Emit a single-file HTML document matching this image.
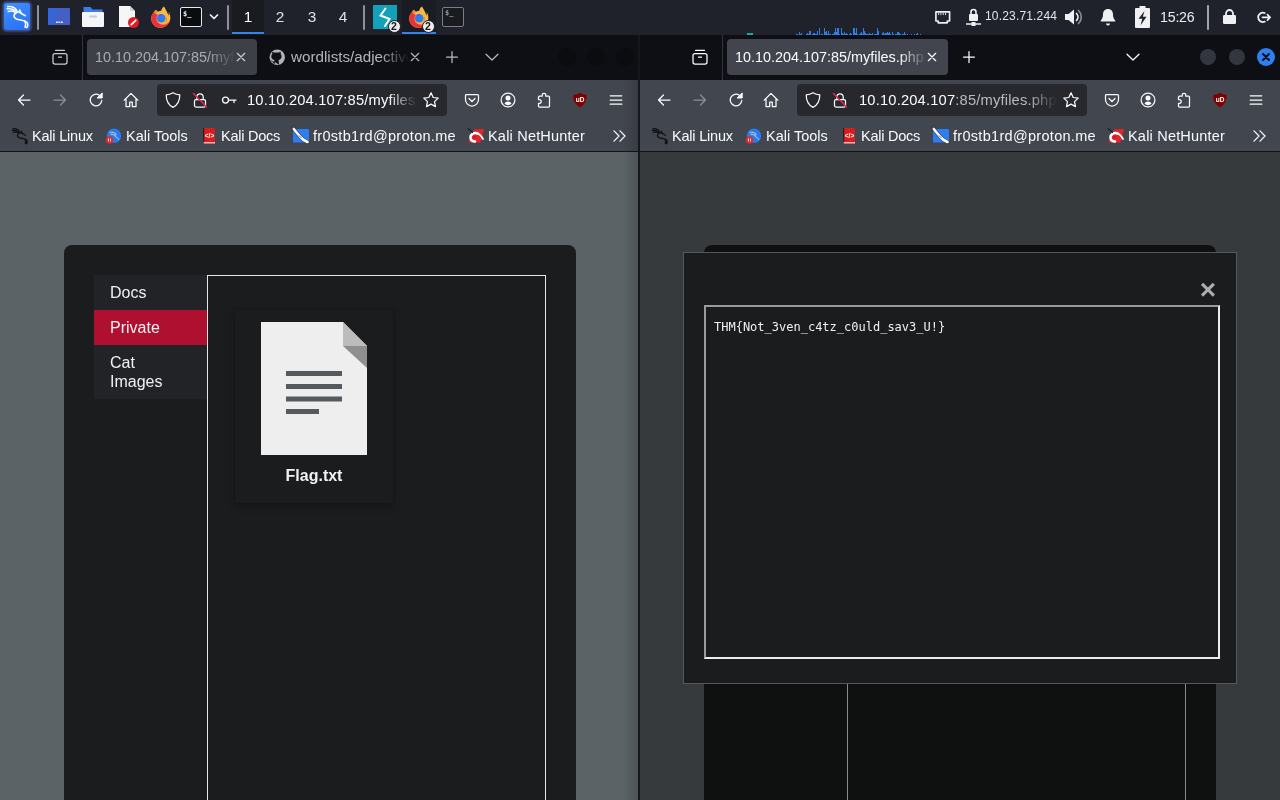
<!DOCTYPE html>
<html lang="en">
<head>
<meta charset="utf-8">
<title>Desktop</title>
<style>
*{box-sizing:border-box;margin:0;padding:0}
html,body{width:1280px;height:800px;overflow:hidden;background:#1f2129;font-family:"Liberation Sans","DejaVu Sans",sans-serif;}
.abs{position:absolute}
#panel{position:absolute;left:0;top:0;width:1280px;height:35px;background:#20222b;will-change:transform}
.ui{font-family:"DejaVu Sans","Liberation Sans",sans-serif;}
.win{position:absolute;top:35px;height:765px;overflow:hidden;will-change:transform}
#w1{left:0;width:638px}
#w2{left:640px;width:640px}
#gap{position:absolute;left:638px;top:35px;width:2px;height:765px;background:#16171c}
.tabbar{position:absolute;left:0;top:0;width:100%;height:45px;background:#0e0f14}
.navbar{position:absolute;left:0;top:45px;width:100%;height:40px;background:#42464e}
.bmbar{position:absolute;left:0;top:85px;width:100%;height:31px;background:#42464e}
.chromeline{position:absolute;left:0;top:116px;width:100%;height:1px;background:#121317;z-index:5}
.content{position:absolute;left:0;top:116px;width:100%;height:649px;overflow:hidden}
.tab{position:absolute;top:4px;height:36px;border-radius:4px;background:#42454d}
.tabtxt{position:absolute;top:13px;font-size:14.4px;line-height:18px;white-space:nowrap;overflow:hidden;color:#fbfbfe}
.urlbar{position:absolute;left:157px;top:4px;width:290px;height:32px;border-radius:4px;background:#26282e}
.urltxt{position:absolute;top:10px;font-size:14.7px;line-height:20px;white-space:nowrap;overflow:hidden;color:#fbfbfe;letter-spacing:0.18px}
.bm{position:absolute;top:6px;font-size:14.5px;line-height:20px;color:#fbfbfe;white-space:nowrap}
svg{position:absolute;overflow:visible}
.ic{fill:none;stroke:#fbfbfe;stroke-width:1.25;stroke-linecap:round;stroke-linejoin:round}
.pg{font-size:16px;line-height:19px;color:#f1f1f1}
.mono{font-family:"DejaVu Sans Mono","Liberation Mono",monospace;font-size:12px;line-height:15px;color:#f1f1f1;white-space:pre}
.fade{-webkit-mask-image:linear-gradient(to right,#000 calc(100% - 28px),transparent);mask-image:linear-gradient(to right,#000 calc(100% - 28px),transparent)}
</style>
</head>
<body>
<!-- PANEL -->
<div id="panel">
<div class="abs" style="left:3px;top:2px;width:28px;height:29px;border-radius:4px;background:#3a4a78;filter:blur(1.200px)"></div><div class="abs" style="left:4px;top:3px;width:26px;height:27px;border-radius:3px;background:linear-gradient(160deg,#3f8fff,#2a6ff0)"></div><svg style="left:4px;top:3px" width="26" height="27" viewBox="0 0 26 27"><g transform="translate(2.500 2.500) scale(1.400)" fill="none" stroke="#fff" stroke-width="1.100" stroke-linecap="round" stroke-linejoin="round"><path d="M.8.800C4 .5 6.500 1.800 7.500 4L13.500 7.300"/><path d="M.5 2.400C3 2 5 2.600 6.500 3.900M1.200 4.300C3 3.600 4.500 3.800 5.800 4.700"/><path d="M9.300 3.200l1.200 2.300"/><path d="M8 4.600C5 5.600 4.500 8.600 7 9.600c3 1 6 .9 7.500 2.400 1 1 .8 2.500 0 3.800M13 11c.9 1.600.8 3.200.3 4.500"/></g></svg><div class="abs" style="left:37px;top:5px;width:2px;height:25px;background:#8f9197;border-radius:1px"></div><svg style="left:48px;top:8px" width="22" height="17" viewBox="0 0 22 17"><rect width="22" height="17" rx="1" fill="#4560c4"/><path d="M0 0h11L4 17H0Z" fill="#3565d8"/><rect x="8" y="13.500" width="1.800" height="1.500" fill="#e8ecff"/><rect x="10.500" y="13.500" width="1.800" height="1.500" fill="#e8ecff"/><rect x="13" y="13.500" width="1.800" height="1.500" fill="#e8ecff"/></svg><svg style="left:82px;top:7px" width="22" height="20" viewBox="0 0 22 20"><path d="M1.500 0h7l2 2.500h10v5h-19Z" fill="#3b7df0"/><rect x="0" y="5" width="22" height="15" rx="1" fill="#f4f5f7"/><rect x="7" y="8.500" width="8" height="2" rx="1" fill="#c9ccd2"/></svg><svg style="left:118px;top:6px" width="22" height="22" viewBox="0 0 22 22"><path d="M1 0h11l5 5v16H1Z" fill="#f6f6f7"/><path d="M12 0l5 5h-5Z" fill="#d0d2d6"/><circle cx="15.500" cy="16.500" r="5.500" fill="#e01b24"/><path d="M13.300 18.700l4.400-4.400" stroke="#fff" stroke-width="1.800" stroke-linecap="round"/></svg><svg style="left:150px;top:6px" width="22" height="22" viewBox="0 0 22 22"><g><path d="M3.500 6.500C1 9 .5 13 2 16.500c1.800 4 6 6 10 5.200 4.500-.9 7.800-4.500 8.300-9 .2-2.500-.5-5-1.700-6.700.3 1.500.2 2.800-.3 3.800C17.500 6 15.500 3 14 .5c-1.500 1-2.500 2.500-2.700 4.300-1.200 0-2.300.3-3.300 1-.8-.3-1.500-1-1.800-2C5 4.500 4.500 5.500 4.700 6.800Z" fill="#f7b944"/><path d="M3.500 6.500C1 9 .5 13 2 16.500c1.800 4 6 6 10 5.200 4.500-.9 7.800-4.500 8.300-9-.8 3.500-3.500 5.800-6.800 6-4 .2-7-2.800-7-6.200 0-1.500.5-2.800 1.500-3.800-1.300-.2-2.300-.8-3-2-.7-.1-1.200-.1-1.500-.2Z" fill="#e8323c"/><path d="M6.200 3.800c.3 1 1 1.700 1.800 2-.8.600-1.400 1.300-1.800 2.200-1-.3-1.700-.8-2.200-1.500C4 5.200 5 4.300 6.200 3.800Z" fill="#f08a33"/><circle cx="11.200" cy="12.300" r="4.300" fill="#2f7cf2"/><path d="M8.500 9c1-1 2.500-1.200 4-.8-1 .2-1.500.8-1.500 1.500-1 0-1.800-.2-2.500-.7Z" fill="#5a4fd6"/><path d="M15.500 9.500c1.500 1.500 2 4 1 6-.5 1-1.500 2-2.500 2.500 2-2 2.500-5.500 1.500-8.500Z" fill="#f08a33"/></g></defs></svg><div class="abs" style="left:3px;top:2px;width:28px;height:29px;border-radius:4px;background:#3a4a78;filter:blur(1.200px)"></div><div class="abs" style="left:4px;top:3px;width:26px;height:27px;border-radius:3px;background:linear-gradient(160deg,#3f8fff,#2a6ff0)"></div><svg style="left:4px;top:3px" width="26" height="27" viewBox="0 0 26 27"><g transform="translate(2.500 2.500) scale(1.400)" fill="none" stroke="#fff" stroke-width="1.100" stroke-linecap="round" stroke-linejoin="round"><path d="M.8.800C4 .5 6.500 1.800 7.500 4L13.500 7.300"/><path d="M.5 2.400C3 2 5 2.600 6.500 3.900M1.200 4.300C3 3.600 4.500 3.800 5.800 4.700"/><path d="M9.300 3.200l1.200 2.300"/><path d="M8 4.600C5 5.600 4.500 8.600 7 9.600c3 1 6 .9 7.500 2.400 1 1 .8 2.500 0 3.800M13 11c.9 1.600.8 3.200.3 4.500"/></g></svg><div class="abs" style="left:180px;top:7px;width:22px;height:20px;background:#0b0c0f;border:1.500px solid #e9eaec;border-radius:2px"></div><div class="abs" style="left:183px;top:10px;font-size:7px;line-height:8px;font-weight:bold;color:#f2f2f2;font-family:'DejaVu Sans Mono',monospace">$_</div><svg style="left:209px;top:13px" width="10" height="8" viewBox="0 0 10 8"><path d="M1.500 2L5 5.500 8.500 2" fill="none" stroke="#f2f2f2" stroke-width="1.700" stroke-linecap="round" stroke-linejoin="round"/></svg><div class="abs" style="left:227px;top:5px;width:2px;height:25px;background:#8f9197;border-radius:1px"></div><div class="abs" style="left:232px;top:0;width:32px;height:35px;background:#1a1b21"></div><div class="abs" style="left:232px;top:32px;width:32px;height:2px;background:#3584e4"></div><div class="abs" style="left:232px;top:7px;width:32px;text-align:center;font-size:15.4px;line-height:20px;color:#ffffff">1</div><div class="abs" style="left:264px;top:7px;width:32px;text-align:center;font-size:15.4px;line-height:20px;color:#dfe0e4">2</div><div class="abs" style="left:296px;top:7px;width:32px;text-align:center;font-size:15.4px;line-height:20px;color:#dfe0e4">3</div><div class="abs" style="left:327px;top:7px;width:32px;text-align:center;font-size:15.4px;line-height:20px;color:#dfe0e4">4</div><div class="abs" style="left:363px;top:5px;width:2px;height:25px;background:#8f9197;border-radius:1px"></div><div class="abs" style="left:373px;top:5px;width:24px;height:24px;background:#12a1b8"></div><svg style="left:373px;top:5px" width="24" height="24" viewBox="0 0 24 24"><path d="M12.500 3.500L7.500 10.500l9 3.500L12 21" fill="none" stroke="#fff" stroke-width="2" stroke-linejoin="miter" stroke-linecap="round"/></svg><div class="abs" style="left:387.5px;top:19.5px;width:13px;height:13px;border-radius:7px;background:#ececee;border:1px solid #1b1c22;text-align:center;font-size:10.5px;line-height:11px;font-weight:bold;color:#16171c">2</div><div class="abs" style="left:402px;top:0;width:34px;height:35px;background:#1a1c23"></div><div class="abs" style="left:402px;top:32px;width:34px;height:2px;background:#3584e4"></div><svg style="left:408px;top:6px" width="22" height="22" viewBox="0 0 22 22"><g><path d="M3.500 6.500C1 9 .5 13 2 16.500c1.800 4 6 6 10 5.200 4.500-.9 7.800-4.500 8.300-9 .2-2.500-.5-5-1.700-6.700.3 1.500.2 2.800-.3 3.800C17.500 6 15.500 3 14 .5c-1.500 1-2.500 2.500-2.700 4.300-1.200 0-2.300.3-3.300 1-.8-.3-1.500-1-1.800-2C5 4.500 4.500 5.500 4.700 6.800Z" fill="#f7b944"/><path d="M3.500 6.500C1 9 .5 13 2 16.500c1.800 4 6 6 10 5.200 4.500-.9 7.800-4.500 8.300-9-.8 3.500-3.500 5.800-6.800 6-4 .2-7-2.800-7-6.200 0-1.500.5-2.800 1.500-3.800-1.300-.2-2.300-.8-3-2-.7-.1-1.200-.1-1.500-.2Z" fill="#e8323c"/><path d="M6.200 3.800c.3 1 1 1.700 1.800 2-.8.600-1.400 1.300-1.800 2.200-1-.3-1.700-.8-2.200-1.500C4 5.200 5 4.300 6.200 3.800Z" fill="#f08a33"/><circle cx="11.200" cy="12.300" r="4.300" fill="#2f7cf2"/><path d="M8.500 9c1-1 2.500-1.200 4-.8-1 .2-1.500.8-1.500 1.500-1 0-1.800-.2-2.500-.7Z" fill="#5a4fd6"/><path d="M15.500 9.500c1.500 1.500 2 4 1 6-.5 1-1.500 2-2.500 2.500 2-2 2.500-5.500 1.500-8.500Z" fill="#f08a33"/></g></defs></svg><div class="abs" style="left:3px;top:2px;width:28px;height:29px;border-radius:4px;background:#3a4a78;filter:blur(1.200px)"></div><div class="abs" style="left:4px;top:3px;width:26px;height:27px;border-radius:3px;background:linear-gradient(160deg,#3f8fff,#2a6ff0)"></div><svg style="left:4px;top:3px" width="26" height="27" viewBox="0 0 26 27"><g transform="translate(2.500 2.500) scale(1.400)" fill="none" stroke="#fff" stroke-width="1.100" stroke-linecap="round" stroke-linejoin="round"><path d="M.8.800C4 .5 6.500 1.800 7.500 4L13.500 7.300"/><path d="M.5 2.400C3 2 5 2.600 6.500 3.900M1.200 4.300C3 3.600 4.500 3.800 5.800 4.700"/><path d="M9.300 3.200l1.200 2.300"/><path d="M8 4.600C5 5.600 4.500 8.600 7 9.600c3 1 6 .9 7.500 2.400 1 1 .8 2.500 0 3.800M13 11c.9 1.600.8 3.200.3 4.500"/></g></svg><div class="abs" style="left:421.5px;top:19.5px;width:13px;height:13px;border-radius:7px;background:#ececee;border:1px solid #1b1c22;text-align:center;font-size:10.5px;line-height:11px;font-weight:bold;color:#16171c">2</div><div class="abs" style="left:442px;top:7px;width:22px;height:20px;background:#1a1b20;border:1px solid #7c7e85;border-radius:2px"></div><div class="abs" style="left:445px;top:9px;font-size:7px;line-height:8px;font-weight:bold;color:#9c9da2;font-family:'DejaVu Sans Mono',monospace">$_</div><div class="abs" style="left:747px;top:33px;width:6px;height:2px;background:#1aa9a0"></div><div class="abs" style="left:796px;top:34px;width:1px;height:1px;background:#2f7fe8"></div><div class="abs" style="left:797px;top:34px;width:1px;height:1px;background:#2f7fe8"></div><div class="abs" style="left:799px;top:32px;width:1px;height:3px;background:#2f7fe8"></div><div class="abs" style="left:800px;top:34px;width:1px;height:1px;background:#2f7fe8"></div><div class="abs" style="left:801px;top:33px;width:1px;height:2px;background:#2f7fe8"></div><div class="abs" style="left:806px;top:34px;width:1px;height:1px;background:#2f7fe8"></div><div class="abs" style="left:807px;top:33px;width:1px;height:2px;background:#2f7fe8"></div><div class="abs" style="left:808px;top:34px;width:1px;height:1px;background:#2f7fe8"></div><div class="abs" style="left:809px;top:31px;width:1px;height:4px;background:#2f7fe8"></div><div class="abs" style="left:810px;top:31px;width:1px;height:4px;background:#2f7fe8"></div><div class="abs" style="left:812px;top:34px;width:1px;height:1px;background:#2f7fe8"></div><div class="abs" style="left:813px;top:33px;width:1px;height:2px;background:#2f7fe8"></div><div class="abs" style="left:814px;top:33px;width:1px;height:2px;background:#2f7fe8"></div><div class="abs" style="left:815px;top:34px;width:1px;height:1px;background:#2f7fe8"></div><div class="abs" style="left:816px;top:34px;width:1px;height:1px;background:#2f7fe8"></div><div class="abs" style="left:817px;top:31px;width:1px;height:4px;background:#2f7fe8"></div><div class="abs" style="left:819px;top:28px;width:1px;height:7px;background:#2f7fe8"></div><div class="abs" style="left:821px;top:34px;width:1px;height:1px;background:#2f7fe8"></div><div class="abs" style="left:822px;top:34px;width:1px;height:1px;background:#2f7fe8"></div><div class="abs" style="left:824px;top:28px;width:1px;height:7px;background:#2f7fe8"></div><div class="abs" style="left:825px;top:32px;width:1px;height:3px;background:#2f7fe8"></div><div class="abs" style="left:826px;top:31px;width:1px;height:4px;background:#2f7fe8"></div><div class="abs" style="left:827px;top:34px;width:1px;height:1px;background:#2f7fe8"></div><div class="abs" style="left:828px;top:31px;width:1px;height:4px;background:#2f7fe8"></div><div class="abs" style="left:829px;top:34px;width:1px;height:1px;background:#2f7fe8"></div><div class="abs" style="left:830px;top:34px;width:1px;height:1px;background:#2f7fe8"></div><div class="abs" style="left:832px;top:34px;width:1px;height:1px;background:#2f7fe8"></div><div class="abs" style="left:833px;top:34px;width:1px;height:1px;background:#2f7fe8"></div><div class="abs" style="left:834px;top:32px;width:1px;height:3px;background:#2f7fe8"></div><div class="abs" style="left:835px;top:28px;width:1px;height:7px;background:#2f7fe8"></div><div class="abs" style="left:836px;top:32px;width:1px;height:3px;background:#2f7fe8"></div><div class="abs" style="left:837px;top:28px;width:1px;height:7px;background:#2f7fe8"></div><div class="abs" style="left:838px;top:28px;width:1px;height:7px;background:#2f7fe8"></div><div class="abs" style="left:839px;top:34px;width:1px;height:1px;background:#2f7fe8"></div><div class="abs" style="left:841px;top:28px;width:1px;height:7px;background:#2f7fe8"></div><div class="abs" style="left:842px;top:33px;width:1px;height:2px;background:#2f7fe8"></div><div class="abs" style="left:843px;top:34px;width:1px;height:1px;background:#2f7fe8"></div><div class="abs" style="left:844px;top:32px;width:1px;height:3px;background:#2f7fe8"></div><div class="abs" style="left:845px;top:34px;width:1px;height:1px;background:#2f7fe8"></div><div class="abs" style="left:846px;top:33px;width:1px;height:2px;background:#2f7fe8"></div><div class="abs" style="left:847px;top:34px;width:1px;height:1px;background:#2f7fe8"></div><div class="abs" style="left:849px;top:34px;width:1px;height:1px;background:#2f7fe8"></div><div class="abs" style="left:850px;top:33px;width:1px;height:2px;background:#2f7fe8"></div><div class="abs" style="left:851px;top:34px;width:1px;height:1px;background:#2f7fe8"></div><div class="abs" style="left:853px;top:28px;width:1px;height:7px;background:#2f7fe8"></div><div class="abs" style="left:854px;top:28px;width:1px;height:7px;background:#2f7fe8"></div><div class="abs" style="left:855px;top:33px;width:1px;height:2px;background:#2f7fe8"></div><div class="abs" style="left:856px;top:28px;width:1px;height:7px;background:#2f7fe8"></div><div class="abs" style="left:857px;top:34px;width:1px;height:1px;background:#2f7fe8"></div><div class="abs" style="left:859px;top:34px;width:1px;height:1px;background:#2f7fe8"></div><div class="abs" style="left:860px;top:33px;width:1px;height:2px;background:#2f7fe8"></div><div class="abs" style="left:861px;top:32px;width:1px;height:3px;background:#2f7fe8"></div><div class="abs" style="left:862px;top:34px;width:1px;height:1px;background:#2f7fe8"></div><div class="abs" style="left:863px;top:28px;width:1px;height:7px;background:#2f7fe8"></div><div class="abs" style="left:864px;top:31px;width:1px;height:4px;background:#2f7fe8"></div><div class="abs" style="left:865px;top:33px;width:1px;height:2px;background:#2f7fe8"></div><div class="abs" style="left:866px;top:34px;width:1px;height:1px;background:#2f7fe8"></div><div class="abs" style="left:867px;top:34px;width:1px;height:1px;background:#2f7fe8"></div><div class="abs" style="left:868px;top:34px;width:1px;height:1px;background:#2f7fe8"></div><div class="abs" style="left:869px;top:33px;width:1px;height:2px;background:#2f7fe8"></div><div class="abs" style="left:870px;top:34px;width:1px;height:1px;background:#2f7fe8"></div><div class="abs" style="left:871px;top:34px;width:1px;height:1px;background:#2f7fe8"></div><div class="abs" style="left:872px;top:33px;width:1px;height:2px;background:#2f7fe8"></div><div class="abs" style="left:874px;top:34px;width:1px;height:1px;background:#2f7fe8"></div><div class="abs" style="left:875px;top:34px;width:1px;height:1px;background:#2f7fe8"></div><div class="abs" style="left:876px;top:34px;width:1px;height:1px;background:#2f7fe8"></div><div class="abs" style="left:877px;top:28px;width:1px;height:7px;background:#2f7fe8"></div><div class="abs" style="left:878px;top:31px;width:1px;height:4px;background:#2f7fe8"></div><div class="abs" style="left:882px;top:33px;width:1px;height:2px;background:#2f7fe8"></div><div class="abs" style="left:883px;top:32px;width:1px;height:3px;background:#2f7fe8"></div><div class="abs" style="left:884px;top:34px;width:1px;height:1px;background:#2f7fe8"></div><div class="abs" style="left:885px;top:33px;width:1px;height:2px;background:#2f7fe8"></div><div class="abs" style="left:886px;top:33px;width:1px;height:2px;background:#2f7fe8"></div><div class="abs" style="left:887px;top:32px;width:1px;height:3px;background:#2f7fe8"></div><div class="abs" style="left:888px;top:33px;width:1px;height:2px;background:#2f7fe8"></div><div class="abs" style="left:889px;top:32px;width:1px;height:3px;background:#2f7fe8"></div><div class="abs" style="left:890px;top:34px;width:1px;height:1px;background:#2f7fe8"></div><div class="abs" style="left:892px;top:32px;width:1px;height:3px;background:#2f7fe8"></div><div class="abs" style="left:893px;top:34px;width:1px;height:1px;background:#2f7fe8"></div><div class="abs" style="left:895px;top:34px;width:1px;height:1px;background:#2f7fe8"></div><div class="abs" style="left:896px;top:34px;width:1px;height:1px;background:#2f7fe8"></div><div class="abs" style="left:897px;top:32px;width:1px;height:3px;background:#2f7fe8"></div><div class="abs" style="left:898px;top:32px;width:1px;height:3px;background:#2f7fe8"></div><div class="abs" style="left:899px;top:33px;width:1px;height:2px;background:#2f7fe8"></div><div class="abs" style="left:900px;top:34px;width:1px;height:1px;background:#2f7fe8"></div><div class="abs" style="left:902px;top:34px;width:1px;height:1px;background:#2f7fe8"></div><div class="abs" style="left:903px;top:34px;width:1px;height:1px;background:#2f7fe8"></div><div class="abs" style="left:904px;top:32px;width:1px;height:3px;background:#2f7fe8"></div><div class="abs" style="left:905px;top:34px;width:1px;height:1px;background:#2f7fe8"></div><div class="abs" style="left:907px;top:34px;width:1px;height:1px;background:#2f7fe8"></div><div class="abs" style="left:911px;top:34px;width:1px;height:1px;background:#2f7fe8"></div><div class="abs" style="left:914px;top:34px;width:1px;height:1px;background:#2f7fe8"></div><div class="abs" style="left:916px;top:34px;width:1px;height:1px;background:#2f7fe8"></div><div class="abs" style="left:917px;top:33px;width:1px;height:2px;background:#2f7fe8"></div><div class="abs" style="left:920px;top:34px;width:1px;height:1px;background:#2f7fe8"></div><svg style="left:935px;top:10.500px" width="15.500" height="12.800" viewBox="0 0 17 14"><path d="M1 1h15v10h-2.500v2h-10v-2H1Z" fill="none" stroke="#f0f0f2" stroke-width="1.800" stroke-linejoin="round"/><path d="M4 2v2.500M6.500 2v2.500M9 2v2.500M11.500 2v2.500" stroke="#f0f0f2" stroke-width="1"/></svg><svg style="left:965.500px;top:8px" width="15" height="19" viewBox="0 0 15 19"><rect x="3" y="6" width="9" height="7" rx="1" fill="#f0f0f2"/><path d="M5 6V4a2.500 2.500 0 0 1 5 0v2" fill="none" stroke="#f0f0f2" stroke-width="1.600"/><path d="M0 16h15" stroke="#f0f0f2" stroke-width="1.500"/><rect x="5.500" y="14" width="4" height="4" fill="#f0f0f2"/></svg><div class="abs" style="left:985px;top:9px;font-size:12px;line-height:15px;color:#e4e4e7;white-space:nowrap;letter-spacing:0.17px">10.23.71.244</div><svg style="left:1064px;top:8px" width="19" height="18" viewBox="0 0 19 18"><path d="M1 6h3.500L10 1.500v15L4.500 12H1Z" fill="#f0f0f2"/><path d="M12.500 5.500a5 5 0 0 1 0 7" fill="none" stroke="#f0f0f2" stroke-width="1.700" stroke-linecap="round"/><path d="M14.500 2.500a9 9 0 0 1 0 13" fill="none" stroke="#8b8d93" stroke-width="1.700" stroke-linecap="round"/></svg><svg style="left:1100px;top:8px" width="16" height="18" viewBox="0 0 16 18"><path d="M8 1c3 0 5 2.200 5 5.500 0 3 .8 4.500 2.200 6v1H.8v-1C2.200 11 3 9.500 3 6.500 3 3.200 5 1 8 1Z" fill="#f0f0f2"/><path d="M6 15.500a2 2 0 0 0 4 0Z" fill="#f0f0f2"/></svg><svg style="left:1135px;top:6px" width="15" height="22" viewBox="0 0 15 22"><path d="M4.500 0h6v2H14a1 1 0 0 1 1 1v18a1 1 0 0 1-1 1H1a1 1 0 0 1-1-1V3a1 1 0 0 1 1-1h3.500Z" fill="#f0f0f2"/><path d="M9.500 5L3.500 12.800h3.800L5.500 19.500l6-8.800H7.800Z" fill="#20222b"/></svg><div class="abs" style="left:1160px;top:7px;font-size:14.2px;line-height:20px;color:#ececee;white-space:nowrap;letter-spacing:-0.2px">15:26</div><div class="abs" style="left:1207px;top:5px;width:2px;height:25px;background:#a3a4a9;border-radius:1px"></div><svg style="left:1223px;top:9px" width="13" height="15" viewBox="0 0 13 15"><rect x="0" y="6" width="13" height="9" rx="1.200" fill="#f0f0f2"/><path d="M3 6V4.500a3.500 3.500 0 0 1 7 0V6" fill="none" stroke="#f0f0f2" stroke-width="1.800"/></svg><svg style="left:1257px;top:11px" width="14.500" height="12.700" viewBox="0 0 16 14"><path d="M8.500 2.200A5.200 5.200 0 1 0 8.500 11.800" fill="none" stroke="#f0f0f2" stroke-width="2" stroke-linecap="round"/><path d="M6 7h8M11.500 4l3 3-3 3" fill="none" stroke="#f0f0f2" stroke-width="1.800" stroke-linecap="round" stroke-linejoin="round"/></svg>
</div>

<!-- WINDOW 1 -->
<div class="win" id="w1">
<div class="tabbar">
<svg style="left:52px;top:14px" width="16" height="16" viewBox="0 0 16 16" opacity=".8"><g class="ic" stroke-width="1.200"><rect x="1" y="4.500" width="14" height="10.500" rx="2"/><path d="M3.500 1.300h9M6.500 8.200h3"/></g></svg><div class="abs" style="left:82px;top:0;width:1px;height:45px;background:#33353c"></div><div class="tab" style="left:87px;width:170px;background:#3d4047"></div><div class="tabtxt fade" style="left:95px;width:141px;color:#a9aaaf">10.10.204.107:85/myfiles.php</div><svg style="left:233px;top:14px" width="16" height="16" viewBox="0 0 16 16" opacity=".75"><g class="ic" stroke-width="1.150"><path d="M4.300 4.300l7.400 7.400M11.700 4.300l-7.400 7.400"/></g></svg><svg style="left:268.500px;top:13.500px" width="16.500" height="16.500" viewBox="0 0 16 16" opacity=".72"><g><circle cx="8" cy="8" r="7.500" fill="#f3f3f6"/><path d="M5.200 14.800v-2.300c-2.200.5-2.600-1-3-1.600M5.200 12.300c0-.8.100-1.300.5-1.700-1.800-.3-3.200-1-3.200-3.500 0-.8.300-1.500.8-2-.2-.6-.2-1.300.1-2 .8 0 1.500.4 2 .8a7 7 0 0 1 3.600 0c.5-.4 1.200-.8 2-.8.300.7.300 1.400.1 2 .5.500.8 1.200.8 2 0 2.500-1.400 3.200-3.200 3.500.4.400.6 1 .6 1.800v2.600" fill="#0e0f14" stroke="#0e0f14" stroke-width=".6"/></g></svg><div class="tabtxt fade" style="left:291px;width:118px;color:#b3b4b9;font-size:15.2px">wordlists/adjectives.txt</div><svg style="left:407px;top:14px" width="16" height="16" viewBox="0 0 16 16" opacity=".7"><g class="ic" stroke-width="1.150"><path d="M4.300 4.300l7.400 7.400M11.700 4.300l-7.400 7.400"/></g></svg><svg style="left:444px;top:14px" width="16" height="16" viewBox="0 0 16 16" opacity=".72"><g class="ic" stroke-width="1.300"><path d="M8 2.500v11M2.500 8h11"/></g></svg><svg style="left:484px;top:14px" width="16" height="16" viewBox="0 0 16 16" opacity=".72"><g class="ic" stroke-width="1.300"><path d="M2 5.200L8 11l6-5.800"/></g></svg><div class="abs" style="left:558px;top:13px;width:18px;height:18px;border-radius:9px;background:#0b0c10"></div><div class="abs" style="left:587px;top:13px;width:18px;height:18px;border-radius:9px;background:#0b0c10"></div><div class="abs" style="left:616px;top:13px;width:18px;height:18px;border-radius:9px;background:#0b0c10"></div>
</div>
<div class="navbar">
<svg style="left:16px;top:12px" width="16" height="16" viewBox="0 0 16 16" ><g class="ic"><path d="M14 8H2.500M7.500 3L2.500 8l5 5"/></g></svg><svg style="left:52px;top:12px" width="16" height="16" viewBox="0 0 16 16" opacity=".4"><g class="ic"><path d="M2 8h11.500M8.500 3l5 5-5 5"/></g></svg><svg style="left:88px;top:12px" width="16" height="16" viewBox="0 0 16 16" ><g class="ic"><path d="M13.800 8.300A5.800 5.800 0 1 1 11.600 3.400"/><path d="M14.200 1.300V6H9.500Z" fill="#fbfbfe" stroke-width="1"/></g></svg><svg style="left:123px;top:12px" width="16" height="16" viewBox="0 0 16 16" ><g class="ic"><path d="M1.200 8.200L8 1.400l6.800 6.800M3 7v7.600h3.700v-4.600h2.600v4.600H13V7"/></g></svg><div class="urlbar"></div><svg style="left:165px;top:12px" width="16" height="16" viewBox="0 0 16 16" ><g class="ic"><path d="M8 .8c2.200 1.400 4.400 2 6.800 2 0 5.800-1.600 10-6.800 12.600C2.800 12.800 1.200 8.600 1.200 2.800c2.400 0 4.600-.6 6.800-2Z"/></g></svg><svg style="left:192px;top:12px" width="16" height="16" viewBox="0 0 16 16" ><g class="ic"><rect x="2.500" y="7.500" width="11" height="7.500" rx="1.500"/><path d="M4.800 7.500V5a3.200 3.200 0 0 1 6.400 0v2.500"/><path d="M1.500 1.500l13 13.500" stroke="#e22850" stroke-width="1.500"/></g></svg><svg style="left:221px;top:12px" width="16" height="16" viewBox="0 0 16 16" ><g class="ic"><circle cx="4.500" cy="8" r="3"/><path d="M7.500 8h7.500M13 8v2.500"/></g></svg><div class="urltxt fade" style="left:247px;width:170px">10.10.204.107:85/myfiles.php</div><svg style="left:423px;top:12px" width="16" height="16" viewBox="0 0 16 16" ><g class="ic"><path d="M8 .8l2.200 4.700 5 .6-3.700 3.500 1 5L8 12.100l-4.500 2.500 1-5L.8 6.100l5-.6Z"/></g></svg><svg style="left:464px;top:12px" width="16" height="16" viewBox="0 0 16 16" ><g class="ic"><path d="M2.500 2.500h11a1 1 0 0 1 1 1v4a6.500 6.500 0 0 1-13 0v-4a1 1 0 0 1 1-1Z"/><path d="M5 6.500l3 3 3-3"/></g></svg><svg style="left:500px;top:12px" width="16" height="16" viewBox="0 0 16 16" ><g class="ic"><circle cx="8" cy="8" r="6.900"/><circle cx="8" cy="6" r="1.900" fill="#fbfbfe"/><path d="M4.600 11.800c.4-1.600 1.600-2.300 3.400-2.300s3 .7 3.400 2.300c-.9.900-2.100 1.400-3.400 1.400s-2.500-.5-3.400-1.400Z" fill="#fbfbfe" stroke="none"/></g></svg><svg style="left:536px;top:12px" width="16" height="16" viewBox="0 0 16 16" ><g class="ic"><path d="M6.200 4.200V3.200a1.800 1.800 0 0 1 3.600 0v1h2.700a1 1 0 0 1 1 1V14a1 1 0 0 1-1 1H3.500a1 1 0 0 1-1-1v-2.700h.8a1.900 1.900 0 0 0 0-3.800H2.500V5.200a1 1 0 0 1 1-1Z"/></g></svg><svg style="left:572px;top:12px" width="16" height="16" viewBox="0 0 16 16" ><g><path d="M8 .8c2.200 1.500 4.300 2 6.700 2 0 6.200-1.800 9.800-6.700 12.400C3.100 12.600 1.300 9 1.300 2.800c2.400 0 4.500-.5 6.700-2Z" fill="#800000"/><text x="8" y="10" font-size="6.500" font-weight="bold" text-anchor="middle" fill="#fff" font-family="Liberation Sans,sans-serif">uD</text></g></svg><svg style="left:608px;top:12px" width="16" height="16" viewBox="0 0 16 16" ><g class="ic" stroke-width="1.350"><path d="M2.200 3.800h11.600M2.200 8h11.600M2.200 12.200h11.600"/></g></svg>
</div>
<div class="bmbar">
<svg style="left:12px;top:8px" width="16" height="16" viewBox="0 0 16 16"><g fill="none" stroke="#101115" stroke-width="1.250" stroke-linecap="round" stroke-linejoin="round"><path d="M.8.800C4 .5 6.500 1.800 7.500 4L13.500 7.300"/><path d="M.5 2.400C3 2 5 2.600 6.500 3.900M1.200 4.300C3 3.600 4.500 3.800 5.800 4.700"/><path d="M9.300 3.200l1.200 2.300"/><path d="M8 4.600C5 5.600 4.500 8.600 7 9.600c3 1 6 .9 7.500 2.400 1 1 .8 2.500 0 3.800M13 11c.9 1.600.8 3.200.3 4.500"/></g></svg><div class="bm" style="left:32px;letter-spacing:-0.2px">Kali Linux</div><svg style="left:105px;top:8px" width="18" height="18" viewBox="0 0 18 18"><circle cx="9" cy="7.800" r="7.200" fill="#2a7bea"/><path d="M5 4.300c2.500-.4 4.500.2 6 1.800M6 6.500c1.500-.3 3 0 4 1M11 6.100c-1.300.9-1.300 2.400.3 3.100 1 .5 1.800 1 2.300 2.200" fill="none" stroke="#cfe0fb" stroke-width=".9" stroke-linecap="round"/><circle cx="4.500" cy="12" r="3.800" fill="#e02a2a"/><path d="M3.500 10.500v3M5.500 10.500v3" stroke="#f7d9d9" stroke-width="1"/></svg><div class="bm" style="left:126px">Kali Tools</div><svg style="left:203px;top:8px" width="12" height="16" viewBox="0 0 12 16"><rect x="0" y="0" width="12" height="16" rx="1" fill="#d91c1c"/><rect x="0" y="0" width="1.200" height="16" fill="#3a1a22"/><rect x="0.500" y="14.200" width="11.500" height="1.200" fill="#e9e3e6"/><text x="6.500" y="9.500" font-size="6.500" font-weight="bold" text-anchor="middle" fill="#fff" font-family="Liberation Sans,sans-serif">&lt;/&gt;</text></svg><div class="bm" style="left:221px;letter-spacing:-0.25px">Kali Docs</div><svg style="left:292px;top:7px" width="18" height="18" viewBox="0 0 18 18"><rect x="1" y="2" width="16" height="13.500" rx="1" fill="#2f7df3"/><path d="M1.500 1.500L5 6l3 3.500 3 3 4.500 2.500" fill="none" stroke="#23252b" stroke-width="4" stroke-linecap="round" stroke-linejoin="round" opacity=".55"/><path d="M1.800 2L5 6l3 3.500 3 3 4.500 2.500" fill="none" stroke="#fafbff" stroke-width="2.600" stroke-linecap="round" stroke-linejoin="round"/><path d="M7 8.500l2.500 2.500" stroke="#333" stroke-width=".7"/></svg><div class="bm" style="left:313px;letter-spacing:0.3px">fr0stb1rd@proton.me</div><svg style="left:467px;top:8px" width="18" height="16" viewBox="0 0 18 16"><path d="M7 1.500L17 1 13.500 14.500H1.500Z" fill="#e3262b"/><path d="M10.500 5.500C6.500 4 3.500 6.500 3.500 9.500c0 2.500 2 4 4.500 4" fill="none" stroke="#fff" stroke-width="2.600" stroke-linecap="round"/><path d="M10 5c2.500 1 4.500 3 6 6" fill="none" stroke="#fff" stroke-width="1.800" stroke-linecap="round"/><path d="M1 .8C3 1.500 4.500 3 5.500 4.500" fill="none" stroke="#1a1b20" stroke-width="1.200" stroke-linecap="round"/><circle cx="7.500" cy="9" r="1.200" fill="#b81d22"/></svg><div class="bm" style="left:488px;letter-spacing:0.2px">Kali NetHunter</div><svg style="left:613px;top:9.500px" width="13" height="12" viewBox="0 0 13 12"><path d="M1 .8L6 6 1 11.200M7 .8L12 6 7 11.200" fill="none" stroke="#fbfbfe" stroke-width="1.200" stroke-linecap="round" stroke-linejoin="round"/></svg>
</div>
<div class="chromeline"></div>
<div class="content" style="background:#5b6367">
<div class="abs" style="left:64px;top:94px;width:512px;height:600px;background:#1b1c1e;border-radius:8px 8px 0 0"></div>
<div class="abs" style="left:94px;top:124px;width:113px;height:35px;background:#222327"></div>
<div class="abs" style="left:94px;top:159px;width:113px;height:35px;background:#b01030"></div>
<div class="abs" style="left:94px;top:194px;width:113px;height:54px;background:#222327"></div>
<div class="abs pg" style="left:110px;top:132px;">Docs</div>
<div class="abs pg" style="left:110px;top:167px;">Private</div>
<div class="abs pg" style="left:110px;top:202px;">Cat<br>Images</div>
<div class="abs" style="left:207px;top:124px;width:339px;height:560px;border:1px solid #e6e6e6;border-bottom:none"></div>
<div class="abs" style="left:235px;top:159px;width:158px;height:193px;background:#1b1c1e;box-shadow:0 4px 8px 0 rgba(0,0,0,.2),0 0 2px rgba(0,0,0,.15)"></div>
<svg style="left:261px;top:171px" width="106" height="133" viewBox="0 0 106 133">
<path d="M0 0H82L106 24V133H0Z" fill="#eeeeee"/>
<path d="M82 24H106V46Z" fill="#8f8f8f"/>
<path d="M82 0L106 24H82Z" fill="#bcbcbc"/>
<rect x="25" y="49" width="56" height="5" fill="#555a5e"/>
<rect x="25" y="62" width="56" height="5" fill="#555a5e"/>
<rect x="25" y="74.500" width="56" height="5" fill="#555a5e"/>
<rect x="25" y="87" width="33" height="5" fill="#555a5e"/>
</svg>
<div class="abs" style="left:235px;top:316px;width:158px;text-align:center;font-weight:bold;font-size:16px;line-height:18px;color:#f1f1f1">Flag.txt</div>

</div>
</div>
<div class="abs" style="left:624px;top:80px;width:14px;height:720px;background:linear-gradient(to right,rgba(20,22,30,0),rgba(20,22,30,.2))"></div>
<div id="gap"></div>

<!-- WINDOW 2 -->
<div class="win" id="w2">
<div class="tabbar">
<svg style="left:52px;top:14px" width="16" height="16" viewBox="0 0 16 16" ><g class="ic" stroke-width="1.200"><rect x="1" y="4.500" width="14" height="10.500" rx="2"/><path d="M3.500 1.300h9M6.500 8.200h3"/></g></svg><div class="abs" style="left:82px;top:0;width:1px;height:45px;background:#33353c"></div><div class="tab" style="left:87px;width:221px"></div><div class="tabtxt fade" style="left:95px;width:192px">10.10.204.107:85/myfiles.php</div><svg style="left:284px;top:14px" width="16" height="16" viewBox="0 0 16 16" ><g class="ic" stroke-width="1.150"><path d="M4.300 4.300l7.400 7.400M11.700 4.300l-7.400 7.400"/></g></svg><svg style="left:321px;top:14px" width="16" height="16" viewBox="0 0 16 16" ><g class="ic" stroke-width="1.300"><path d="M8 2.500v11M2.500 8h11"/></g></svg><svg style="left:485px;top:14px" width="16" height="16" viewBox="0 0 16 16" ><g class="ic" stroke-width="1.300"><path d="M2 5.200L8 11l6-5.800"/></g></svg><div class="abs" style="left:560px;top:14px;width:16px;height:16px;border-radius:8px;background:#33363f"></div><div class="abs" style="left:589px;top:14px;width:16px;height:16px;border-radius:8px;background:#33363f"></div><div class="abs" style="left:617px;top:13px;width:18px;height:18px;border-radius:9px;background:#2f7ef2"></div><svg style="left:621px;top:17px" width="10" height="10" viewBox="0 0 10 10"><path d="M2 2l6 6M8 2l-6 6" stroke="#0e0f14" stroke-width="2" stroke-linecap="round"/></svg>
</div>
<div class="navbar">
<svg style="left:16px;top:12px" width="16" height="16" viewBox="0 0 16 16" ><g class="ic"><path d="M14 8H2.500M7.500 3L2.500 8l5 5"/></g></svg><svg style="left:52px;top:12px" width="16" height="16" viewBox="0 0 16 16" opacity=".4"><g class="ic"><path d="M2 8h11.500M8.500 3l5 5-5 5"/></g></svg><svg style="left:88px;top:12px" width="16" height="16" viewBox="0 0 16 16" ><g class="ic"><path d="M13.800 8.300A5.800 5.800 0 1 1 11.600 3.400"/><path d="M14.200 1.300V6H9.500Z" fill="#fbfbfe" stroke-width="1"/></g></svg><svg style="left:123px;top:12px" width="16" height="16" viewBox="0 0 16 16" ><g class="ic"><path d="M1.200 8.200L8 1.400l6.800 6.800M3 7v7.600h3.700v-4.600h2.600v4.600H13V7"/></g></svg><div class="urlbar"></div><svg style="left:165px;top:12px" width="16" height="16" viewBox="0 0 16 16" ><g class="ic"><path d="M8 .8c2.200 1.400 4.400 2 6.800 2 0 5.800-1.600 10-6.800 12.600C2.800 12.800 1.200 8.600 1.200 2.800c2.400 0 4.600-.6 6.800-2Z"/></g></svg><svg style="left:192px;top:12px" width="16" height="16" viewBox="0 0 16 16" ><g class="ic"><rect x="2.500" y="7.500" width="11" height="7.500" rx="1.500"/><path d="M4.800 7.500V5a3.200 3.200 0 0 1 6.400 0v2.500"/><path d="M1.500 1.500l13 13.500" stroke="#e22850" stroke-width="1.500"/></g></svg><div class="urltxt fade" style="left:219px;width:198px">10.10.204.107<span style="color:#b8b9be">:85/myfiles.php</span></div><svg style="left:423px;top:12px" width="16" height="16" viewBox="0 0 16 16" ><g class="ic"><path d="M8 .8l2.200 4.700 5 .6-3.700 3.500 1 5L8 12.100l-4.500 2.500 1-5L.8 6.100l5-.6Z"/></g></svg><svg style="left:464px;top:12px" width="16" height="16" viewBox="0 0 16 16" ><g class="ic"><path d="M2.500 2.500h11a1 1 0 0 1 1 1v4a6.500 6.500 0 0 1-13 0v-4a1 1 0 0 1 1-1Z"/><path d="M5 6.500l3 3 3-3"/></g></svg><svg style="left:500px;top:12px" width="16" height="16" viewBox="0 0 16 16" ><g class="ic"><circle cx="8" cy="8" r="6.900"/><circle cx="8" cy="6" r="1.900" fill="#fbfbfe"/><path d="M4.600 11.800c.4-1.600 1.600-2.300 3.400-2.300s3 .7 3.400 2.300c-.9.900-2.100 1.400-3.400 1.400s-2.500-.5-3.400-1.400Z" fill="#fbfbfe" stroke="none"/></g></svg><svg style="left:536px;top:12px" width="16" height="16" viewBox="0 0 16 16" ><g class="ic"><path d="M6.200 4.200V3.200a1.800 1.800 0 0 1 3.600 0v1h2.700a1 1 0 0 1 1 1V14a1 1 0 0 1-1 1H3.500a1 1 0 0 1-1-1v-2.700h.8a1.900 1.900 0 0 0 0-3.800H2.500V5.200a1 1 0 0 1 1-1Z"/></g></svg><svg style="left:572px;top:12px" width="16" height="16" viewBox="0 0 16 16" ><g><path d="M8 .8c2.200 1.500 4.300 2 6.700 2 0 6.200-1.800 9.800-6.700 12.400C3.100 12.600 1.300 9 1.300 2.800c2.400 0 4.500-.5 6.700-2Z" fill="#800000"/><text x="8" y="10" font-size="6.500" font-weight="bold" text-anchor="middle" fill="#fff" font-family="Liberation Sans,sans-serif">uD</text></g></svg><svg style="left:608px;top:12px" width="16" height="16" viewBox="0 0 16 16" ><g class="ic" stroke-width="1.350"><path d="M2.200 3.800h11.600M2.200 8h11.600M2.200 12.200h11.600"/></g></svg>
</div>
<div class="bmbar">
<svg style="left:12px;top:8px" width="16" height="16" viewBox="0 0 16 16"><g fill="none" stroke="#101115" stroke-width="1.250" stroke-linecap="round" stroke-linejoin="round"><path d="M.8.800C4 .5 6.500 1.800 7.500 4L13.500 7.300"/><path d="M.5 2.400C3 2 5 2.600 6.500 3.900M1.200 4.300C3 3.600 4.500 3.800 5.800 4.700"/><path d="M9.300 3.200l1.200 2.300"/><path d="M8 4.600C5 5.600 4.500 8.600 7 9.600c3 1 6 .9 7.500 2.400 1 1 .8 2.500 0 3.800M13 11c.9 1.600.8 3.200.3 4.500"/></g></svg><div class="bm" style="left:32px;letter-spacing:-0.2px">Kali Linux</div><svg style="left:105px;top:8px" width="18" height="18" viewBox="0 0 18 18"><circle cx="9" cy="7.800" r="7.200" fill="#2a7bea"/><path d="M5 4.300c2.500-.4 4.500.2 6 1.800M6 6.500c1.500-.3 3 0 4 1M11 6.100c-1.300.9-1.300 2.400.3 3.100 1 .5 1.800 1 2.300 2.200" fill="none" stroke="#cfe0fb" stroke-width=".9" stroke-linecap="round"/><circle cx="4.500" cy="12" r="3.800" fill="#e02a2a"/><path d="M3.500 10.500v3M5.500 10.500v3" stroke="#f7d9d9" stroke-width="1"/></svg><div class="bm" style="left:126px">Kali Tools</div><svg style="left:203px;top:8px" width="12" height="16" viewBox="0 0 12 16"><rect x="0" y="0" width="12" height="16" rx="1" fill="#d91c1c"/><rect x="0" y="0" width="1.200" height="16" fill="#3a1a22"/><rect x="0.500" y="14.200" width="11.500" height="1.200" fill="#e9e3e6"/><text x="6.500" y="9.500" font-size="6.500" font-weight="bold" text-anchor="middle" fill="#fff" font-family="Liberation Sans,sans-serif">&lt;/&gt;</text></svg><div class="bm" style="left:221px;letter-spacing:-0.25px">Kali Docs</div><svg style="left:292px;top:7px" width="18" height="18" viewBox="0 0 18 18"><rect x="1" y="2" width="16" height="13.500" rx="1" fill="#2f7df3"/><path d="M1.500 1.500L5 6l3 3.500 3 3 4.500 2.500" fill="none" stroke="#23252b" stroke-width="4" stroke-linecap="round" stroke-linejoin="round" opacity=".55"/><path d="M1.800 2L5 6l3 3.500 3 3 4.500 2.500" fill="none" stroke="#fafbff" stroke-width="2.600" stroke-linecap="round" stroke-linejoin="round"/><path d="M7 8.500l2.500 2.500" stroke="#333" stroke-width=".7"/></svg><div class="bm" style="left:313px;letter-spacing:0.3px">fr0stb1rd@proton.me</div><svg style="left:467px;top:8px" width="18" height="16" viewBox="0 0 18 16"><path d="M7 1.500L17 1 13.500 14.500H1.500Z" fill="#e3262b"/><path d="M10.500 5.500C6.500 4 3.500 6.500 3.500 9.500c0 2.500 2 4 4.500 4" fill="none" stroke="#fff" stroke-width="2.600" stroke-linecap="round"/><path d="M10 5c2.500 1 4.500 3 6 6" fill="none" stroke="#fff" stroke-width="1.800" stroke-linecap="round"/><path d="M1 .8C3 1.500 4.500 3 5.500 4.500" fill="none" stroke="#1a1b20" stroke-width="1.200" stroke-linecap="round"/><circle cx="7.500" cy="9" r="1.200" fill="#b81d22"/></svg><div class="bm" style="left:488px;letter-spacing:0.2px">Kali NetHunter</div><svg style="left:613px;top:9.500px" width="13" height="12" viewBox="0 0 13 12"><path d="M1 .8L6 6 1 11.200M7 .8L12 6 7 11.200" fill="none" stroke="#fbfbfe" stroke-width="1.200" stroke-linecap="round" stroke-linejoin="round"/></svg>
</div>
<div class="chromeline"></div>
<div class="content" style="background:#363a3d">
<div class="abs" style="left:64px;top:94px;width:512px;height:600px;background:#0f1110;border-radius:8px 8px 0 0"></div>
<div class="abs" style="left:207px;top:124px;width:339px;height:560px;border:1px solid #8a8c8c;border-bottom:none"></div>
<div class="abs" style="left:43px;top:101px;width:554px;height:432px;background:#1b1c1e;border:1px solid #54585a"></div>
<div class="abs" style="left:556px;top:124px;width:24px;height:30px;text-align:center;font-weight:bold;font-size:28px;line-height:30px;color:#adadad">×</div>
<div class="abs" style="left:64px;top:154px;width:516px;height:354px;border:2px solid;border-color:#9a9a9a #ededed #ededed #9a9a9a;background:#1b1c1e"></div>
<div class="abs mono" style="left:74px;top:169px;">THM{Not_3ven_c4tz_c0uld_sav3_U!}</div>

</div>
</div>
</body>
</html>
